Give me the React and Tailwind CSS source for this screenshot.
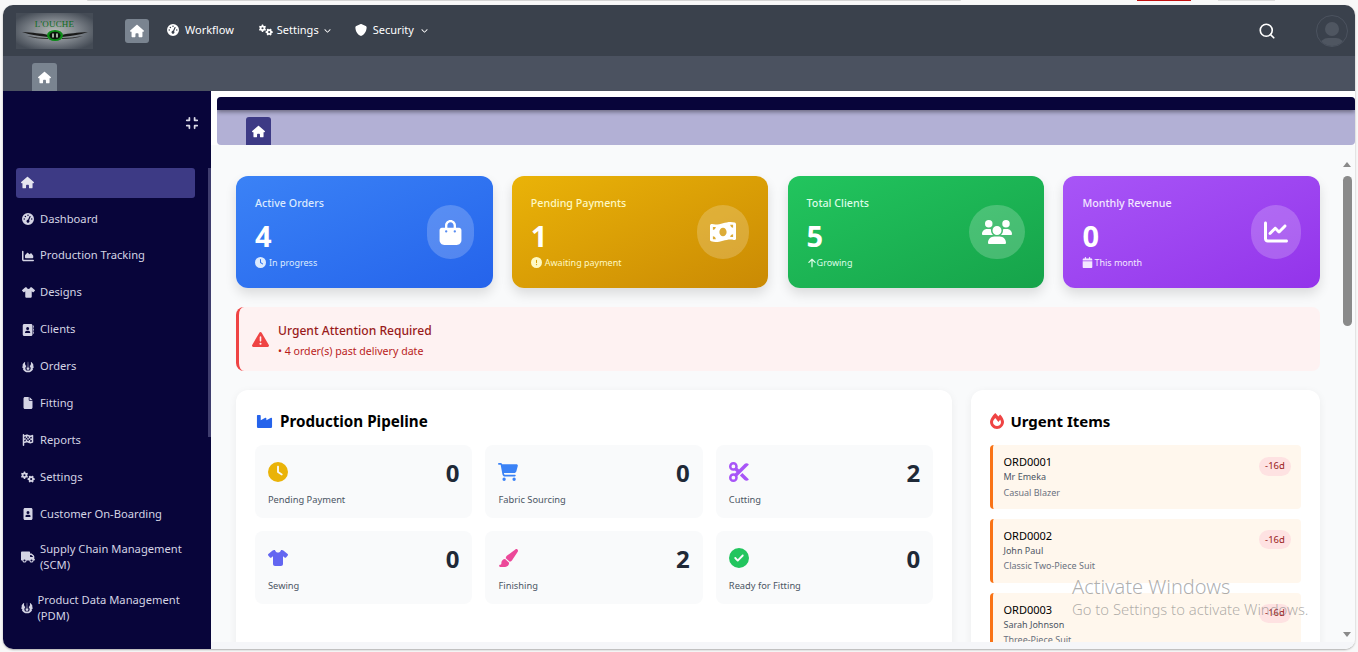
import React from "react";
import {
  FaHouse, FaGaugeHigh, FaGears, FaShield, FaChartArea, FaShirt, FaAddressBook, FaJedi, FaFile,
  FaFlagCheckered, FaImagePortrait, FaTruck, FaCompress, FaBagShopping, FaMoneyBillWave, FaUsers, FaChartLine,
  FaClock, FaCircleExclamation, FaArrowUp, FaCalendar, FaTriangleExclamation, FaIndustry, FaCartShopping,
  FaScissors, FaPaintbrush, FaCircleCheck, FaChevronDown,
} from "react-icons/fa6";
import { FaFireAlt } from "react-icons/fa";
import { Search } from "lucide-react";

const sideItems = [
  { icon: FaGaugeHigh, label: "Dashboard", size: 12 },
  { icon: FaChartArea, label: "Production Tracking", size: 12 },
  { icon: FaShirt, label: "Designs", size: 13 },
  { icon: FaAddressBook, label: "Clients", size: 12 },
  { icon: FaJedi, label: "Orders", size: 12 },
  { icon: FaFile, label: "Fitting", size: 12 },
  { icon: FaFlagCheckered, label: "Reports", size: 12 },
  { icon: FaGears, label: "Settings", size: 14 },
  { icon: FaImagePortrait, label: "Customer On-Boarding", size: 12 },
];

const cards = [
  { label: "Active Orders", value: "4", note: "In progress", Note: FaClock, noteSize: 11, noteIcon: "", Icon: FaBagShopping, bg: "bg-gradient-to-br from-[#3b82f6] to-[#2563eb]", circle: "w-[47px]", size: 25, labelColor: "text-[#dbeafe]", noteColor: "text-[#dbeafe]" },
  { label: "Pending Payments", value: "1", note: "Awaiting payment", Note: FaCircleExclamation, noteSize: 11, noteIcon: "", Icon: FaMoneyBillWave, bg: "bg-gradient-to-br from-[#eab308] to-[#ca8a04]", circle: "w-[52px]", size: 26, labelColor: "text-[#fef9c3]", noteColor: "text-[#fef9c3]" },
  { label: "Total Clients", value: "5", note: "Growing", Note: FaArrowUp, noteSize: 10, noteIcon: "-mr-[3px]", Icon: FaUsers, bg: "bg-gradient-to-br from-[#22c55e] to-[#16a34a]", circle: "w-[56px]", size: 30, labelColor: "text-[#dcfce7]", noteColor: "text-[#dcfce7]" },
  { label: "Monthly Revenue", value: "0", note: "This month", Note: FaCalendar, noteSize: 11, noteIcon: "-mr-[2px]", Icon: FaChartLine, bg: "bg-gradient-to-br from-[#a855f7] to-[#9333ea]", circle: "w-[50px]", size: 24, labelColor: "text-[#f3e8ff]", noteColor: "text-[#f3e8ff]" },
];

const pipeline = [
  { Icon: FaClock, color: "text-[#eab308]", label: "Pending Payment", count: 0 },
  { Icon: FaCartShopping, color: "text-[#3b82f6]", label: "Fabric Sourcing", count: 0 },
  { Icon: FaScissors, color: "text-[#a855f7]", label: "Cutting", count: 2 },
  { Icon: FaShirt, color: "text-[#6366f1]", label: "Sewing", count: 0 },
  { Icon: FaPaintbrush, color: "text-[#ec4899]", label: "Finishing", count: 2 },
  { Icon: FaCircleCheck, color: "text-[#22c55e]", label: "Ready for Fitting", count: 0 },
];

const urgent = [
  { id: "ORD0001", name: "Mr Emeka", item: "Casual Blazer" },
  { id: "ORD0002", name: "John Paul", item: "Classic Two-Piece Suit" },
  { id: "ORD0003", name: "Sarah Johnson", item: "Three-Piece Suit" },
];

function Logo() {
  return (
    <div className="w-[77px] h-[36px] flex flex-col items-center bg-[radial-gradient(ellipse_at_center,#b5bab6_0%,#7d838a_45%,#454c56_85%)]">
      <span className="font-['Liberation_Serif',serif] text-[9px] leading-[9px] mt-[7px] text-[#0f6b1c] tracking-[0.2px]">L'OUCHE</span>
      <svg width="68" height="14" viewBox="0 0 68 14" className="-mt-[1px]">
        <path d="M1 4 C12 5 20 5 27 7 L27 9 C18 8 10 7 1 4Z" fill="#1a1a1a" />
        <path d="M67 4 C56 5 48 5 41 7 L41 9 C50 8 58 7 67 4Z" fill="#1a1a1a" />
        <path d="M6 8 C14 9 20 10 27 10 L27 11 C19 11 12 10 6 8Z" fill="#2a2a2a" />
        <path d="M62 8 C54 9 48 10 41 10 L41 11 C49 11 56 10 62 8Z" fill="#2a2a2a" />
        <ellipse cx="34" cy="7.5" rx="8" ry="5.5" fill="#0b8a16" />
        <ellipse cx="34" cy="7.5" rx="5.5" ry="3.8" fill="#0c120c" />
        <rect x="31" y="5.5" width="2" height="4" fill="#9fb09f" />
        <rect x="35" y="5.5" width="2" height="4" fill="#9fb09f" />
      </svg>
    </div>
  );
}

function TopLink({ Icon, label, gap, size = 12, chevron = false, className = "" }) {
  return (
    <div className={`flex items-center text-white text-[11px] pb-[1px] ${className} ${gap}`}>
      <Icon size={size} />
      <span>{label}</span>
      {chevron && <FaChevronDown size={7} className="ml-[1px] mt-[1px]" />}
    </div>
  );
}

function Sidebar() {
  return (
    <aside className="w-[208px] shrink-0 bg-[#08053a] flex">
      <div className="flex-1 min-w-0 flex flex-col">
        <div className="h-[77px] flex justify-end pt-[25px] pr-[9px] text-[#d9d9e6]">
          <FaCompress size={14} />
        </div>
        <div className="mx-[13px] h-[30px] rounded-[3px] bg-[#3d3a85] flex items-center pl-[5px] pb-[2px] text-[#e6e6f0]">
          <FaHouse size={13} />
        </div>
        <div className="mt-[2.5px] flex flex-col text-[#d4d4e4] text-[11.2px]">
          {sideItems.map(({ icon: Icon, label, size }) => (
            <div key={label} className="h-[36.9px] flex items-center pl-[17px]">
              <span className="w-[16px] mr-[4px] shrink-0 flex justify-center"><Icon size={size} /></span>
              <span>{label}</span>
            </div>
          ))}
          <div className="-mt-[1.5px] h-[51px] flex items-center pl-[17px]">
            <span className="w-[16px] mr-[4px] shrink-0 flex justify-center"><FaTruck size={14} /></span>
            <span className="leading-[16px]">Supply Chain Management<br />(SCM)</span>
          </div>
          <div className="h-[51px] flex items-center pl-[17px]">
            <span className="w-[13px] mr-[4.5px] shrink-0 flex justify-center"><FaJedi size={12} /></span>
            <span className="leading-[16px]">Product Data Management<br />(PDM)</span>
          </div>
        </div>
      </div>
      <div className="w-[3px] shrink-0 mt-[77px] h-[269px] bg-[#3f3d6e]" />
    </aside>
  );
}

function StatCard({ c }) {
  const { Icon, Note } = c;
  return (
    <div className={`${c.bg} h-[112px] rounded-[12px] shadow-[0_6px_12px_rgba(0,0,0,0.12)] px-[19px] flex items-center justify-between`}>
      <div className="flex flex-col">
        <span className={`${c.labelColor} text-[10.7px] leading-[16px] font-medium`}>{c.label}</span>
        <span className="text-white text-[29px] leading-[36px] font-bold mt-[7px]">{c.value}</span>
        <span className={`${c.noteColor} text-[9px] leading-[14px] mt-[2px] flex items-center gap-[3px]`}>
          <Note size={c.noteSize} className={c.noteIcon} />
          {c.note}
        </span>
      </div>
      <div className={`${c.circle} h-[54px] rounded-full bg-white/20 flex items-center justify-center text-white shrink-0`}>
        <Icon size={c.size} />
      </div>
    </div>
  );
}

export default function App() {
  return (
    <div className="relative w-[1358px] h-[652px] overflow-hidden bg-[#f8f8f8] pt-[5px] pl-[3px] pr-[3px] pb-[3px] font-['Noto_Sans',sans-serif]">
      <div className="absolute left-[87px] top-0 w-[874px] h-[1px] rounded-b-[2px] bg-[#d4d4d4]" />
      <div className="absolute left-[1137px] top-0 w-[54px] h-[1px] bg-[#c01010]" />
      <div className="absolute left-[1218px] top-0 w-[57px] h-[1px] bg-[#dcdcdc]" />
      <div className="h-full flex flex-col rounded-[10px] overflow-hidden shadow-[0_1px_2px_rgba(0,0,0,0.3)]">
        <header className="h-[51px] shrink-0 bg-[#3a414c] flex items-center pl-[13px] pr-[7px]">
          <Logo />
          <div className="ml-[32px] w-[24px] h-[24px] rounded-[3px] bg-[#7a8490] flex items-center justify-center text-white">
            <FaHouse size={14} />
          </div>
          <TopLink Icon={FaGaugeHigh} label="Workflow" gap="gap-[6px]" className="ml-[18px]" />
          <TopLink Icon={FaGears} size={14} label="Settings" gap="gap-[4px]" chevron className="ml-[25px]" />
          <TopLink Icon={FaShield} label="Security" gap="gap-[6px]" chevron className="ml-[24px]" />
          <div className="ml-auto text-white flex items-center">
            <Search size={18} strokeWidth={2.2} />
          </div>
          <div className="ml-[40px] w-[32px] h-[32px] rounded-full border border-[#4c535f] flex flex-col items-center justify-end overflow-hidden">
            <span className="w-[14px] h-[14px] rounded-full bg-[#4f5661] mb-[2px]" />
            <span className="w-[24px] h-[8px] rounded-t-full bg-[#4f5661]" />
          </div>
        </header>
        <div className="h-[35px] shrink-0 bg-[#4b5260] flex items-end pl-[29px]">
          <div className="w-[25px] h-[28px] rounded-t-[3px] bg-[#7a8490] flex items-center justify-center text-white">
            <FaHouse size={13} />
          </div>
        </div>
        <div className="flex-1 min-h-0 flex">
          <Sidebar />
          <main className="flex-1 min-w-0 bg-[#f9fafb] flex flex-col">
            <div className="shrink-0 bg-white pl-[6px] pt-[6px]">
              <div className="h-[48px] rounded-[4px] bg-[#b2b0d5] flex flex-col overflow-hidden">
                <div className="h-[13px] bg-[#08053a] shadow-[0_2px_4px_rgba(0,0,0,0.4)]" />
                <div className="flex-1 flex items-end pl-[29px] pt-[7px]">
                  <div className="w-[25px] h-[28px] rounded-t-[3px] bg-[#3d3a85] flex items-center justify-center text-white">
                    <FaHouse size={13} />
                  </div>
                </div>
              </div>
            </div>
            <div className="flex-1 min-h-0 flex overflow-hidden">
              <div className="flex-1 min-w-0 pl-[25px] pr-[19px] pt-[31px]">
                <div className="grid grid-cols-4 gap-[19.2px]">
                  {cards.map((c) => <StatCard key={c.label} c={c} />)}
                </div>
                <div className="mt-[19px] h-[64px] rounded-[8px] border-l-[3px] border-[#ef4444] bg-[#fef2f2] flex items-center pl-[13px]">
                  <FaTriangleExclamation size={17} className="text-[#ef4444]" />
                  <div className="ml-[9px] flex flex-col">
                    <span className="text-[12.1px] leading-[18px] font-medium text-[#991b1b] mt-[1px]">Urgent Attention Required</span>
                    <span className="text-[10.6px] leading-[14px] mt-[4px] text-[#b91c1c]">• 4 order(s) past delivery date</span>
                  </div>
                </div>
                <div className="mt-[19px] grid grid-cols-3 gap-[19.2px] items-start">
                  <section className="col-span-2 h-[300px] rounded-[12px] bg-white shadow-[0_2px_8px_rgba(0,0,0,0.06)] px-[19px] pt-[20px]">
                    <h2 className="flex items-center h-[22px] text-[15.2px] font-bold text-black">
                      <FaIndustry size={17} className="text-[#2563eb] ml-[1px]" />
                      <span className="ml-[7px]">Production Pipeline</span>
                    </h2>
                    <div className="mt-[13px] grid grid-cols-3 gap-[13px]">
                      {pipeline.map(({ Icon, color, label, count }) => (
                        <div key={label} className="h-[73px] rounded-[8px] bg-[#f9fafb] px-[13px] pt-[17px]">
                          <div className="flex items-start justify-between h-[24px]">
                            <Icon size={20} className={color} />
                            <span className="text-[24px] leading-[24px] font-bold text-[#1f2937] -mt-[1px]">{count}</span>
                          </div>
                          <div className="mt-[7px] text-[9.3px] leading-[14px] text-[#4b5563]">{label}</div>
                        </div>
                      ))}
                    </div>
                  </section>
                  <section className="h-[300px] rounded-[12px] bg-white shadow-[0_2px_8px_rgba(0,0,0,0.06)] px-[19px] pt-[20px]">
                    <h2 className="flex items-center h-[22px] text-[15px] font-bold text-black">
                      <FaFireAlt size={16} className="text-[#ef4444] -ml-[1px]" />
                      <span className="ml-[5px]">Urgent Items</span>
                    </h2>
                    <div className="mt-[13px] flex flex-col gap-[9.8px]">
                      {urgent.map((u) => (
                        <div key={u.id} className="h-[64px] shrink-0 rounded-[4px] border-l-[3px] border-[#f97316] bg-[#fff7ed] pl-[10px] pr-[10px] pt-[9px] flex justify-between">
                          <div className="flex flex-col">
                            <span className="text-[11px] leading-[15px] text-black">{u.id}</span>
                            <span className="text-[9px] leading-[15.5px] text-[#4b5563]">{u.name}</span>
                            <span className="text-[9px] leading-[15.5px] text-[#6b7280]">{u.item}</span>
                          </div>
                          <span className="w-[32px] h-[19px] rounded-full bg-[#fee2e2] text-[#991b1b] text-[9.5px] flex items-center justify-center mt-[2.5px]">-16d</span>
                        </div>
                      ))}
                    </div>
                  </section>
                </div>
              </div>
              <div className="w-[16px] shrink-0 flex flex-col items-center pt-[17px] pb-[5px]">
                <span className="w-0 h-0 border-x-[4px] border-x-transparent border-b-[5px] border-b-[#8a8a8a]" />
                <span className="mt-[9px] w-[9px] h-[150px] rounded-full bg-[#8a8a8a]" />
                <span className="mt-auto w-0 h-0 border-x-[4px] border-x-transparent border-t-[5px] border-t-[#8a8a8a]" />
              </div>
            </div>
            <div className="h-[7px] shrink-0 bg-[#f5f6f9]" />
          </main>
        </div>
      </div>
      <div className="absolute left-[1072px] top-[575px] text-[#7a7a7a]/60 pointer-events-none whitespace-nowrap">
        <div className="text-[20px] leading-[24px] font-light">Activate Windows</div>
        <div className="text-[14.8px] leading-[18px] mt-[1px] font-light">Go to Settings to activate Windows.</div>
      </div>
    </div>
  );
}
